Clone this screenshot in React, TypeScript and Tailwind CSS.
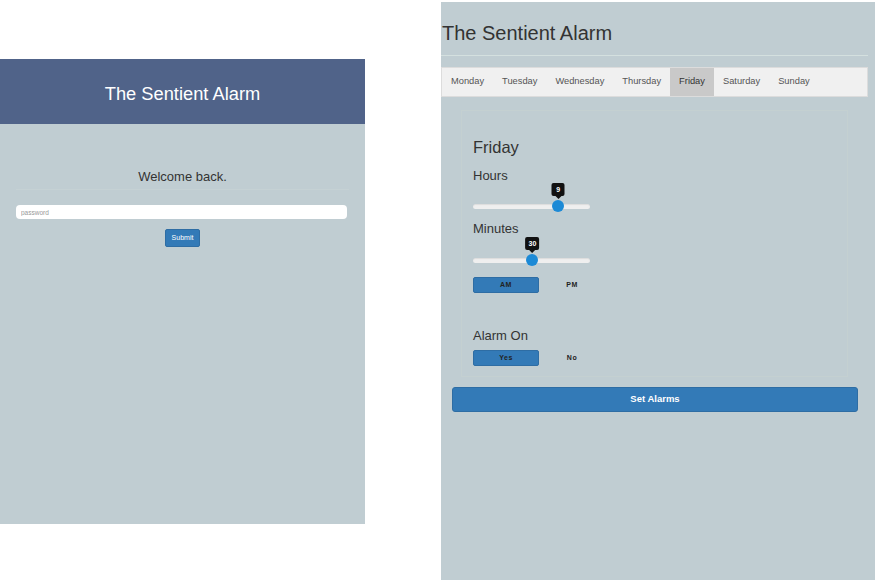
import React from 'react';

const days = ['Monday', 'Tuesday', 'Wednesday', 'Thursday', 'Friday', 'Saturday', 'Sunday'];

interface SliderProps {
  value: number;
  min: number;
  max: number;
}

const Slider: React.FC<SliderProps> = ({ value, min, max }) => {
  const pct = ((value - min) / (max - min)) * 100;
  return (
    <div className="relative w-[117px] h-[26px]">
      <div className="absolute left-0 right-0 top-[18px] h-[5px] rounded-full bg-[#efefef] shadow-[inset_0_1px_1px_rgba(0,0,0,0.08)]" />
      <div
        className="absolute top-[14px] w-[12px] h-[12px] -ml-[6px] rounded-full bg-[#1c8ad6]"
        style={{ left: `${pct}%` }}
      />
      <div
        className="absolute -top-[3px] -translate-x-1/2 flex flex-col items-center"
        style={{ left: `${pct}%` }}
      >
        <div className="h-[13px] min-w-[13px] px-[3px] rounded-[2px] bg-[#111] text-white text-[7px] font-bold leading-[13px] text-center">
          {value}
        </div>
        <div className="w-0 h-0 border-l-[3px] border-r-[3px] border-t-[3px] border-l-transparent border-r-transparent border-t-[#111]" />
      </div>
    </div>
  );
};

interface ToggleProps {
  on: string;
  off: string;
}

const Toggle: React.FC<ToggleProps> = ({ on, off }) => (
  <div className="flex h-[16px]">
    <div className="w-[66px] h-[16px] rounded-[2px] bg-[#337ab7] border border-[#2e6da4] flex items-center justify-center text-[7px] font-bold text-[#222] tracking-[0.5px]">
      {on}
    </div>
    <div className="w-[66px] h-[16px] flex items-center justify-center text-[7px] font-bold text-[#222] tracking-[0.5px]">
      {off}
    </div>
  </div>
);

const App: React.FC = () => {
  return (
    <div className="flex w-[875px] h-[580px] bg-white overflow-hidden font-['Liberation_Sans',Arial,sans-serif]">
      {/* login screen */}
      <div className="mt-[59px] w-[365px] h-[465px] bg-[#c0cdd2] flex flex-col">
        <div className="h-[65px] pt-[5px] bg-[#506389] flex items-center justify-center text-white text-[18.3px]">
          The Sentient Alarm
        </div>
        <div className="px-4 pt-[45px] flex flex-col items-center">
          <div className="text-[13px] leading-[15px] text-[#333]">Welcome back.</div>
          <div className="mt-[5px] w-full border-t border-[#c5d1d4]" />
          <input
            className="mt-[15px] w-[331px] self-start h-[14px] rounded-[4px] bg-white px-[5px] text-[6.5px] placeholder:text-[#999] outline-none"
            placeholder="password"
          />
          <button className="mt-[10px] w-[35px] h-[18px] rounded-[2px] bg-[#337ab7] border border-[#2e6da4] text-white text-[7px]">
            Submit
          </button>
        </div>
      </div>

      {/* alarm screen */}
      <div className="ml-[76px] mt-[2px] w-[434px] h-[578px] bg-[#c0cdd2] flex flex-col">
        <div className="pl-[1px] pt-[20px] text-[20px] leading-[23px] text-[#333]">The Sentient Alarm</div>
        <div className="mt-[10px] mr-[7px] border-t border-[#d4e0df]" />
        <div className="mt-[11px] mr-[7px] h-[30px] bg-[#f0f0f0] border border-[#dcdcdc] flex text-[9.3px] text-[#555]">
          {days.map((d) => (
            <div
              key={d}
              className={
                d === 'Friday'
                  ? 'px-[9px] flex items-center bg-[#c9c9c9] text-[#333]'
                  : 'px-[9px] flex items-center'
              }
            >
              {d}
            </div>
          ))}
        </div>

        <div className="mt-[13px] ml-[20px] w-[387px] border border-[#c4d0d1] pt-[27px] pl-[11px] pb-[10px] text-[#333]">
          <div className="text-[16.5px] leading-[19px]">Friday</div>
          <div className="mt-[11px] text-[13px] leading-[16px]">Hours</div>
          <div className="mt-[2px]">
            <Slider value={9} min={1} max={12} />
          </div>
          <div className="mt-[9px] text-[13px] leading-[16px]">Minutes</div>
          <div className="mt-[3px]">
            <Slider value={30} min={0} max={59} />
          </div>
          <div className="mt-[11px]">
            <Toggle on="AM" off="PM" />
          </div>
          <div className="mt-[35px] text-[13px] leading-[16px]">Alarm On</div>
          <div className="mt-[6px]">
            <Toggle on="Yes" off="No" />
          </div>
        </div>

        <button className="mt-[10px] ml-[11px] w-[406px] h-[25px] rounded-[3px] bg-[#337ab7] border border-[#2e6da4] text-white text-[9.5px] font-bold">
          Set Alarms
        </button>
      </div>
    </div>
  );
};

export default App;
